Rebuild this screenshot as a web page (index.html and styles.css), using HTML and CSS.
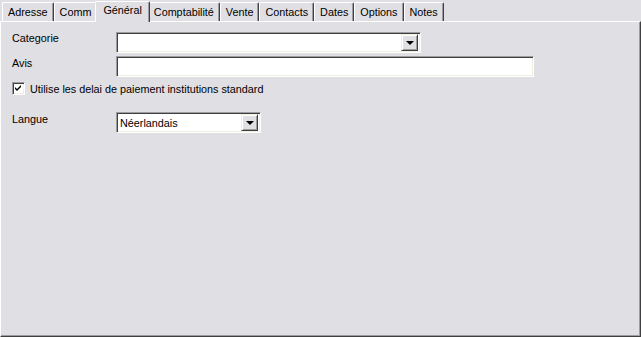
FILE: index.html
```html
<!DOCTYPE html>
<html>
  <head>
    <title>Fiche - Général</title>
    <link rel="stylesheet" href="styles.css">
  </head>
  <body>
    <div class="window">
      <div class="tabs">
        <div class="tab">Adresse</div>
        <div class="tab">Comm</div>
        <div class="tab active">Général</div>
        <div class="tab">Comptabilité</div>
        <div class="tab">Vente</div>
        <div class="tab">Contacts</div>
        <div class="tab">Dates</div>
        <div class="tab">Options</div>
        <div class="tab">Notes</div>
      </div>
      <div class="panel">
        <div class="row">
          <span class="label">Categorie</span>
          <div class="field combo wide">
            <span class="value"></span>
            <span class="arrow"></span>
          </div>
        </div>
        <div class="row">
          <span class="label avis">Avis</span>
          <div class="field text full"></div>
        </div>
        <label class="check-row">
          <span class="check">
            <svg width="9" height="9" viewBox="0 0 9 9"><path d="M1 3 L3 5 L7 1 L7 3 L3 7 L1 5 Z" fill="#000"/></svg>
          </span>
          Utilise les delai de paiement institutions standard
        </label>
        <div class="row lang">
          <span class="label">Langue</span>
          <div class="field combo short">
            <span class="value">Néerlandais</span>
            <span class="arrow"></span>
          </div>
        </div>
      </div>
    </div>
  </body>
</html>
```

FILE: styles.css
```css
* {
  box-sizing: border-box;
}

body, html {
  margin: 0;
  padding: 0;
}

body {
  background-color: #e0dfe3;
  font-family: Tahoma, 'Liberation Sans', sans-serif;
  font-size: 10.8px;
  color: #000;
}

.window {
  width: 641px;
  height: 337px;
  display: flex;
  flex-direction: column;
}

/* tab strip */
.tabs {
  display: flex;
  align-items: flex-end;
  height: 21px;
  padding-left: 2px;
}

.tab {
  position: relative;
  height: 19px;
  padding: 3px 5px 0 5px;
  border-top: 1px solid #fff;
  border-left: 1px solid #fff;
  border-right: 1px solid #404040;
  box-shadow: inset -1px 0 0 #9d9da1;
  border-radius: 2px 2px 0 0;
  white-space: nowrap;
}

.tab.active {
  height: 21px;
  margin: 0 -2px -1px -2px;
  padding: 2px 7px 0 7px;
  background-color: #e0dfe3;
  z-index: 2;
}

/* page area */
.panel {
  flex: 1;
  border-top: 1px solid #fff;
  border-left: 1px solid #fff;
  border-right: 1px solid #404040;
  border-bottom: 1px solid #404040;
  box-shadow: inset -1px -1px 0 #9d9da1;
  padding: 10px 11px 0 11px;
}

.row {
  display: flex;
  align-items: flex-start;
  margin-bottom: 3px;
}

.label {
  width: 104px;
  padding-top: 0;
}

.label.avis {
  padding-top: 1px;
}

.field {
  height: 21px;
  background-color: #fff;
  border-top: 1px solid #9d9da1;
  border-left: 1px solid #9d9da1;
  border-right: 1px solid #fff;
  border-bottom: 1px solid #fff;
  box-shadow: inset 1px 1px 0 #404040, inset -1px -1px 0 #f1efe2;
}

.field.wide {
  width: 305px;
}

.field.full {
  width: 418px;
}

.field.short {
  width: 145px;
}

.combo {
  display: flex;
  align-items: center;
  padding: 2px 2px 2px 3px;
}

.combo .value {
  flex: 1;
}

.arrow {
  width: 17px;
  height: 17px;
  margin-left: auto;
  background-color: #e0dfe3;
  border-top: 1px solid #f1efe2;
  border-left: 1px solid #f1efe2;
  border-right: 1px solid #404040;
  border-bottom: 1px solid #404040;
  box-shadow: inset 1px 1px 0 #fff, inset -1px -1px 0 #9d9da1;
  display: flex;
  align-items: center;
  justify-content: center;
}

.arrow::after {
  content: "";
  border-left: 4px solid transparent;
  border-right: 4px solid transparent;
  border-top: 4px solid #000;
  margin-top: 1px;
}

.check-row {
  display: flex;
  align-items: center;
  gap: 5px;
  margin-top: 5px;
}

.check {
  width: 13px;
  height: 13px;
  background-color: #fff;
  border-top: 1px solid #9d9da1;
  border-left: 1px solid #9d9da1;
  border-right: 1px solid #fff;
  border-bottom: 1px solid #fff;
  box-shadow: inset 1px 1px 0 #404040, inset -1px -1px 0 #f1efe2;
  display: flex;
  align-items: center;
  justify-content: center;
}

.row.lang {
  margin-top: 17px;
}

.row.lang .label {
  padding-top: 1px;
}
```
